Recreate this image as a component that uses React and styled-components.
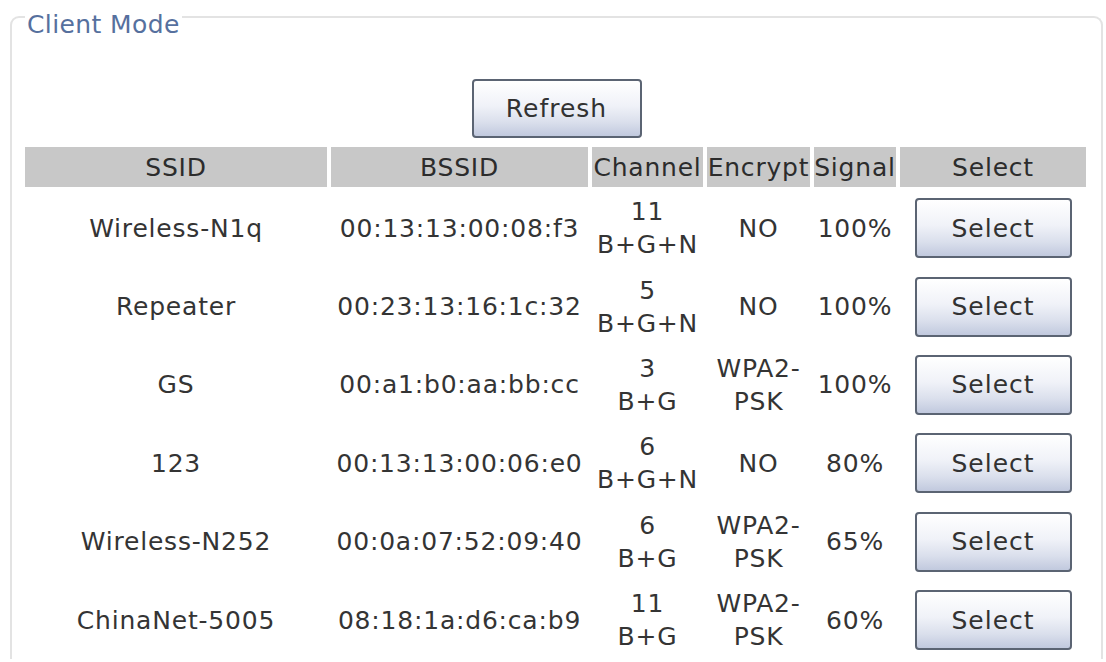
import React from 'react';
import styled, { createGlobalStyle } from 'styled-components';

const GlobalStyle = createGlobalStyle`
  html, body {
    margin: 0;
    background: #ffffff;
  }
  body {
    font-family: "DejaVu Sans", Verdana, sans-serif;
    font-size: 25px;
    letter-spacing: 0.8px;
    color: #343434;
  }
`;

const Panel = styled.fieldset`
  margin: 0 3px 0 10px;
  padding: 0;
  border: 2px solid #e3e3e3;
  border-bottom: none;
  border-radius: 9px 9px 0 0;
  min-width: 0;
`;

const Legend = styled.legend`
  margin-left: 13px;
  padding: 17px 2px 0;
  line-height: 16px;
  font-size: 25px;
  letter-spacing: 0.4px;
  color: #56709e;
`;

const Toolbar = styled.div`
  display: flex;
  justify-content: center;
  margin-top: 46px;
`;

const Button = styled.button`
  width: ${(p) => p.$w}px;
  height: ${(p) => p.$h}px;
  padding: 0;
  border: 2px solid #5b6473;
  border-radius: 4px;
  background: linear-gradient(to bottom, #ffffff 0%, #f0f2f8 45%, #dadfec 75%, #c1c9de 100%);
  font-family: "DejaVu Sans", Verdana, sans-serif;
  font-size: 25px;
  letter-spacing: 1px;
  color: #323232;
  cursor: pointer;
`;

const Table = styled.div`
  margin: 9px 0 0 13px;
  display: flex;
  flex-direction: column;
`;

const columns = '302px 257px 111px 103px 82px 186px';

const HeaderRow = styled.div`
  display: grid;
  grid-template-columns: ${columns};
  column-gap: 4px;
  height: 40px;
  margin-bottom: 2px;
`;

const HeadCell = styled.div`
  background: #c8c8c8;
  display: flex;
  align-items: center;
  justify-content: center;
  color: #2c2c2c;
  white-space: nowrap;
`;

const Row = styled.div`
  display: grid;
  grid-template-columns: ${columns};
  column-gap: 4px;
  height: 78.4px;
`;

const Cell = styled.div`
  display: flex;
  flex-direction: column;
  align-items: center;
  justify-content: center;
  line-height: 33px;
  white-space: nowrap;
`;

const networks = [
  { ssid: 'Wireless-N1q', bssid: '00:13:13:00:08:f3', ch: '11', mode: 'B+G+N', enc: ['NO'], signal: '100%' },
  { ssid: 'Repeater', bssid: '00:23:13:16:1c:32', ch: '5', mode: 'B+G+N', enc: ['NO'], signal: '100%' },
  { ssid: 'GS', bssid: '00:a1:b0:aa:bb:cc', ch: '3', mode: 'B+G', enc: ['WPA2-', 'PSK'], signal: '100%' },
  { ssid: '123', bssid: '00:13:13:00:06:e0', ch: '6', mode: 'B+G+N', enc: ['NO'], signal: '80%' },
  { ssid: 'Wireless-N252', bssid: '00:0a:07:52:09:40', ch: '6', mode: 'B+G', enc: ['WPA2-', 'PSK'], signal: '65%' },
  { ssid: 'ChinaNet-5005', bssid: '08:18:1a:d6:ca:b9', ch: '11', mode: 'B+G', enc: ['WPA2-', 'PSK'], signal: '60%' },
];

export default function App() {
  return (
    <>
      <GlobalStyle />
      <Panel>
        <Legend>Client Mode</Legend>
        <Toolbar>
          <Button $w={170} $h={59}>Refresh</Button>
        </Toolbar>
        <Table>
          <HeaderRow>
            <HeadCell>SSID</HeadCell>
            <HeadCell>BSSID</HeadCell>
            <HeadCell>Channel</HeadCell>
            <HeadCell>Encrypt</HeadCell>
            <HeadCell>Signal</HeadCell>
            <HeadCell>Select</HeadCell>
          </HeaderRow>
          {networks.map((n) => (
            <Row key={n.bssid}>
              <Cell>{n.ssid}</Cell>
              <Cell>{n.bssid}</Cell>
              <Cell>
                <span>{n.ch}</span>
                <span>{n.mode}</span>
              </Cell>
              <Cell>
                {n.enc.map((e) => (
                  <span key={e}>{e}</span>
                ))}
              </Cell>
              <Cell>{n.signal}</Cell>
              <Cell>
                <Button $w={157} $h={60}>Select</Button>
              </Cell>
            </Row>
          ))}
        </Table>
      </Panel>
    </>
  );
}
